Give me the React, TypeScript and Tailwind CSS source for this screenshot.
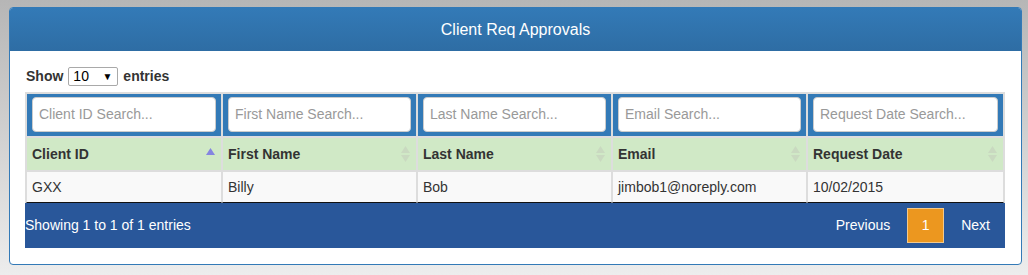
import React from 'react';

interface Column {
  key: string;
  label: string;
  placeholder: string;
  width: string;
}

const columns: Column[] = [
  { key: 'id', label: 'Client ID', placeholder: 'Client ID Search...', width: 'w-[196px]' },
  { key: 'first', label: 'First Name', placeholder: 'First Name Search...', width: 'w-[195px]' },
  { key: 'last', label: 'Last Name', placeholder: 'Last Name Search...', width: 'w-[195px]' },
  { key: 'email', label: 'Email', placeholder: 'Email Search...', width: 'w-[195px]' },
  { key: 'date', label: 'Request Date', placeholder: 'Request Date Search...', width: 'w-[197px]' },
];

const rows = [['GXX', 'Billy', 'Bob', 'jimbob1@noreply.com', '10/02/2015']];

const SortAsc = () => (
  <svg width="9" height="7" viewBox="0 0 9 7" className="absolute right-[6px] top-[10px]">
    <path d="M4.5 0 L9 7 L0 7 Z" fill="#8585e0" />
  </svg>
);

const SortBoth = () => (
  <svg width="9" height="16" viewBox="0 0 9 16" className="absolute right-[6px] top-[8px]">
    <path d="M4.5 0 L9 7 L0 7 Z" fill="#c9d9c0" />
    <path d="M0 9 L9 9 L4.5 16 Z" fill="#c9d9c0" />
  </svg>
);

export default function App() {
  return (
    <div
      className="h-[275px] w-full bg-gradient-to-b from-[#b6b6b6] to-[#ededed] pt-[7px] pl-[9px] pr-[6px] text-[14px] text-[#333]"
      style={{ fontFamily: '"Liberation Sans", Arial, sans-serif' }}
    >
      <div className="h-[258px] overflow-hidden rounded-[4px] border border-[#337ab7] bg-white">
        <div className="flex h-[43px] items-center justify-center bg-gradient-to-b from-[#337ab7] to-[#2e6da4] text-[16px] text-white">
          Client Req Approvals
        </div>
        <div className="pl-[15px] pr-[16px] pt-[15px]">
          <div className="flex h-[20px] items-center pl-[1px] font-bold">
            <span>Show</span>
            <div className="mx-[5px] flex h-[19px] w-[50px] items-center justify-between rounded-[2px] border border-[#a9a9a9] pl-[4px] pr-[5px] font-normal text-black">
              <span>10</span>
              <span className="text-[10px]">▼</span>
            </div>
            <span>entries</span>
          </div>
          <table className="mt-[6px] w-[978px] table-fixed border-separate border-spacing-0 border-x border-t border-[#ddd]">
            <thead>
              <tr>
                {columns.map((c) => (
                  <th key={c.key} className={`${c.width} h-[44px] border border-[#ddd] bg-[#337ab7] px-[5px] pt-[3px] pb-[4px]`}>
                    <div className="flex h-[35px] items-center rounded-[4px] border border-[#ccc] bg-white px-[6px] text-left text-[14px] font-normal text-[#999]">
                      {c.placeholder}
                    </div>
                  </th>
                ))}
              </tr>
              <tr>
                {columns.map((c, i) => (
                  <th
                    key={c.key}
                    className="relative h-[34px] border border-[#ddd] bg-[#d0e9c6] px-[5px] text-left font-bold text-[#333]"
                  >
                    {c.label}
                    {i === 0 ? <SortAsc /> : <SortBoth />}
                  </th>
                ))}
              </tr>
            </thead>
            <tbody>
              {rows.map((r) => (
                <tr key={r[0]}>
                  {r.map((v, i) => (
                    <td key={i} className="h-[32px] border border-b-[#111] border-[#ddd] bg-[#f9f9f9] px-[5px] text-[#333]">
                      {v}
                    </td>
                  ))}
                </tr>
              ))}
            </tbody>
          </table>
          <div className="flex h-[45px] w-[980px] items-center justify-between bg-[#29579a] text-white">
            <span>Showing 1 to 1 of 1 entries</span>
            <div className="flex items-center gap-[5px] pr-[3px]">
              <span className="px-[12px]">Previous</span>
              <span className="flex h-[35px] w-[37px] items-center justify-center border border-[#f3c98c] bg-[#ec971f]">
                1
              </span>
              <span className="px-[12px]">Next</span>
            </div>
          </div>
        </div>
      </div>
    </div>
  );
}
